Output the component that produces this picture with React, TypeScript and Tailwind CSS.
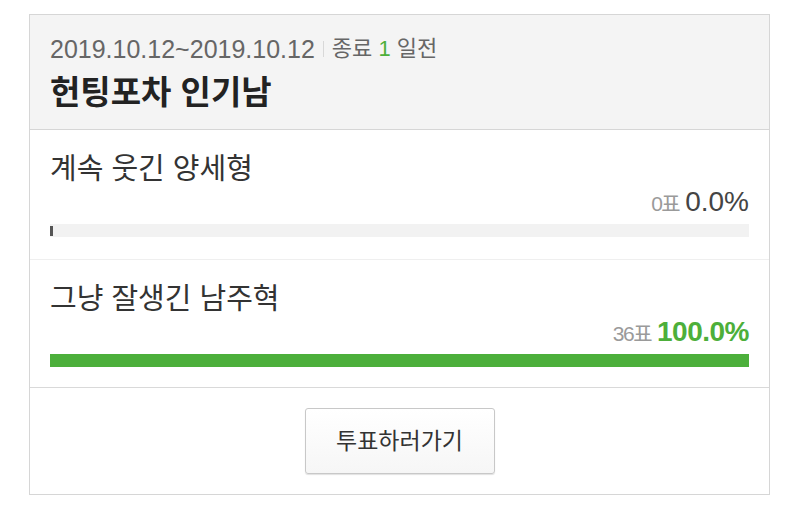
import React from "react";

const font = { fontFamily: '"Liberation Sans", "Noto Sans CJK KR", sans-serif' };

function Option({ label, votes, pct, width, win, last }: { label: string; votes: string; pct: string; width: number; win?: boolean; last?: boolean }) {
  return (
    <div className={`px-[20px] pt-[22px] ${last ? "h-[128px] border-b border-[#d9d9d9]" : "h-[130px] border-b border-[#efefef]"}`}>
      <div className="text-[29px] leading-[34px] text-[#333]">{label}</div>
      <div className="flex justify-end items-baseline h-[32px]">
        <span className="text-[21px] text-[#9a9a9a] tracking-[-1.5px] mr-[6px]">{votes}</span>
        <span className={`text-[28px] leading-[32px] ${win ? "text-[#4daf3a] font-bold tracking-[-0.5px]" : "text-[#444]"}`}>{pct}</span>
      </div>
      <div className="mt-[6px] h-[13px] bg-[#f2f2f2] relative">
        {win ? (
          <div className="h-full bg-[#4caf3b]" style={{ width: `${width}%` }} />
        ) : (
          <div className="absolute left-0 top-[2px] w-[3px] h-[10px] bg-[#555]" />
        )}
      </div>
    </div>
  );
}

export default function App() {
  return (
    <div className="w-[800px] h-[520px] bg-white pt-[14px] pl-[29px]" style={font}>
      <div className="w-[741px] h-[481px] border border-[#d6d6d6] flex flex-col">
        <div className="h-[115px] bg-[#f4f4f4] border-b border-[#d6d6d6] px-[20px] pt-[19px]">
          <div className="flex items-center text-[25px] leading-[30px] text-[#666]">
            <span>2019.10.12~2019.10.12</span>
            <span className="mx-[8px] w-px h-[16px] bg-[#d8d8d8]" />
            <span className="text-[22px]">종료 <span className="text-[#4daf3a]">1</span> 일전</span>
          </div>
          <div className="text-[33px] leading-[38px] font-bold text-[#222] mt-[10px]">헌팅포차 인기남</div>
        </div>
        <Option label="계속 웃긴 양세형" votes="0표" pct="0.0%" width={0} />
        <Option label="그냥 잘생긴 남주혁" votes="36표" pct="100.0%" width={100} win last />
        <div className="flex-1 flex items-center justify-center">
          <button className="w-[190px] h-[66px] border border-[#c8c8c8] rounded-[3px] bg-gradient-to-b from-white to-[#f6f6f6] shadow-[0_1px_1px_rgba(0,0,0,0.12)] text-[23px] text-[#333]">
            투표하러가기
          </button>
        </div>
      </div>
    </div>
  );
}
